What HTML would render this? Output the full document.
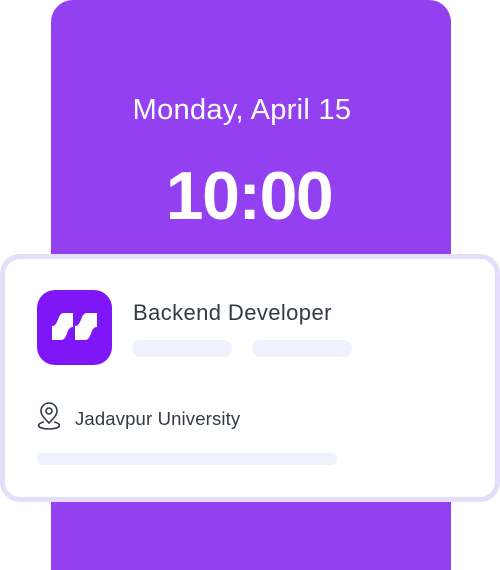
<!DOCTYPE html>
<html><head><style>
html,body{margin:0;padding:0;background:#fff;width:500px;height:570px;overflow:hidden;position:relative;font-family:"Liberation Sans",sans-serif}
.panel{position:absolute;left:51px;top:0;width:400px;height:570px;background:#9340f0;border-radius:22px 22px 0 0}
.date{position:absolute;left:42px;width:400px;top:94px;text-align:center;color:#fff;font-size:29px;font-weight:300;letter-spacing:0.3px}
.time{position:absolute;left:49px;width:400px;top:157px;text-align:center;color:#fff;font-size:68px;font-weight:bold;letter-spacing:-1.5px}
.card{position:absolute;left:0;top:254px;width:490px;height:238px;background:#fff;border:5px solid #e4defb;border-radius:20px}
.logo{position:absolute;left:37px;top:290px;width:75px;height:75px;border-radius:18px;background:#7f16f7}
.t1{position:absolute;left:133px;top:300px;font-size:22px;color:#333a44;letter-spacing:0.4px}
.bar{position:absolute;height:17px;border-radius:9px;background:#eff2fc}
.t2{position:absolute;left:75px;top:408px;font-size:18.5px;color:#333a44;letter-spacing:0.15px}
</style></head><body>
<div class="panel"></div>
<div class="date">Monday, April 15</div>
<div class="time">10:00</div>
<div class="card"></div>
<div class="logo"><svg width="75" height="75" viewBox="37 290 75 75">
<path d="M52 326 C59 326 57 313 64 313 L73 313 L73 327 C66 327 68 340 61 340 L52 340 Z" fill="#fff"/>
<path d="M75 326 C82 326 80 313 87 313 L97 313 L97 327 C90 327 92 340 85 340 L75 340 Z" fill="#fff"/>
</svg></div>
<div class="t1">Backend Developer</div>
<div class="bar" style="left:132px;top:340px;width:100px"></div>
<div class="bar" style="left:252px;top:340px;width:100px"></div>
<svg style="position:absolute;left:36px;top:401px" width="27" height="30" viewBox="0 0 27 30" fill="none" stroke="#333a44" stroke-width="1.6">
<path d="M13 22 C8 17 5 13.5 5 10 A8 8 0 0 1 21 10 C21 13.5 18 17 13 22Z"/>
<circle cx="13" cy="10" r="3"/>
<path d="M8 21 C3 22 2 24 3 25.5 C4 27 9 28 13 28 C17 28 22 27 23 25.5 C24 24 23 22 18 21"/>
</svg>
<div class="t2">Jadavpur University</div>
<div class="bar" style="left:37px;top:453px;width:300px;height:12px"></div>
</body></html>
